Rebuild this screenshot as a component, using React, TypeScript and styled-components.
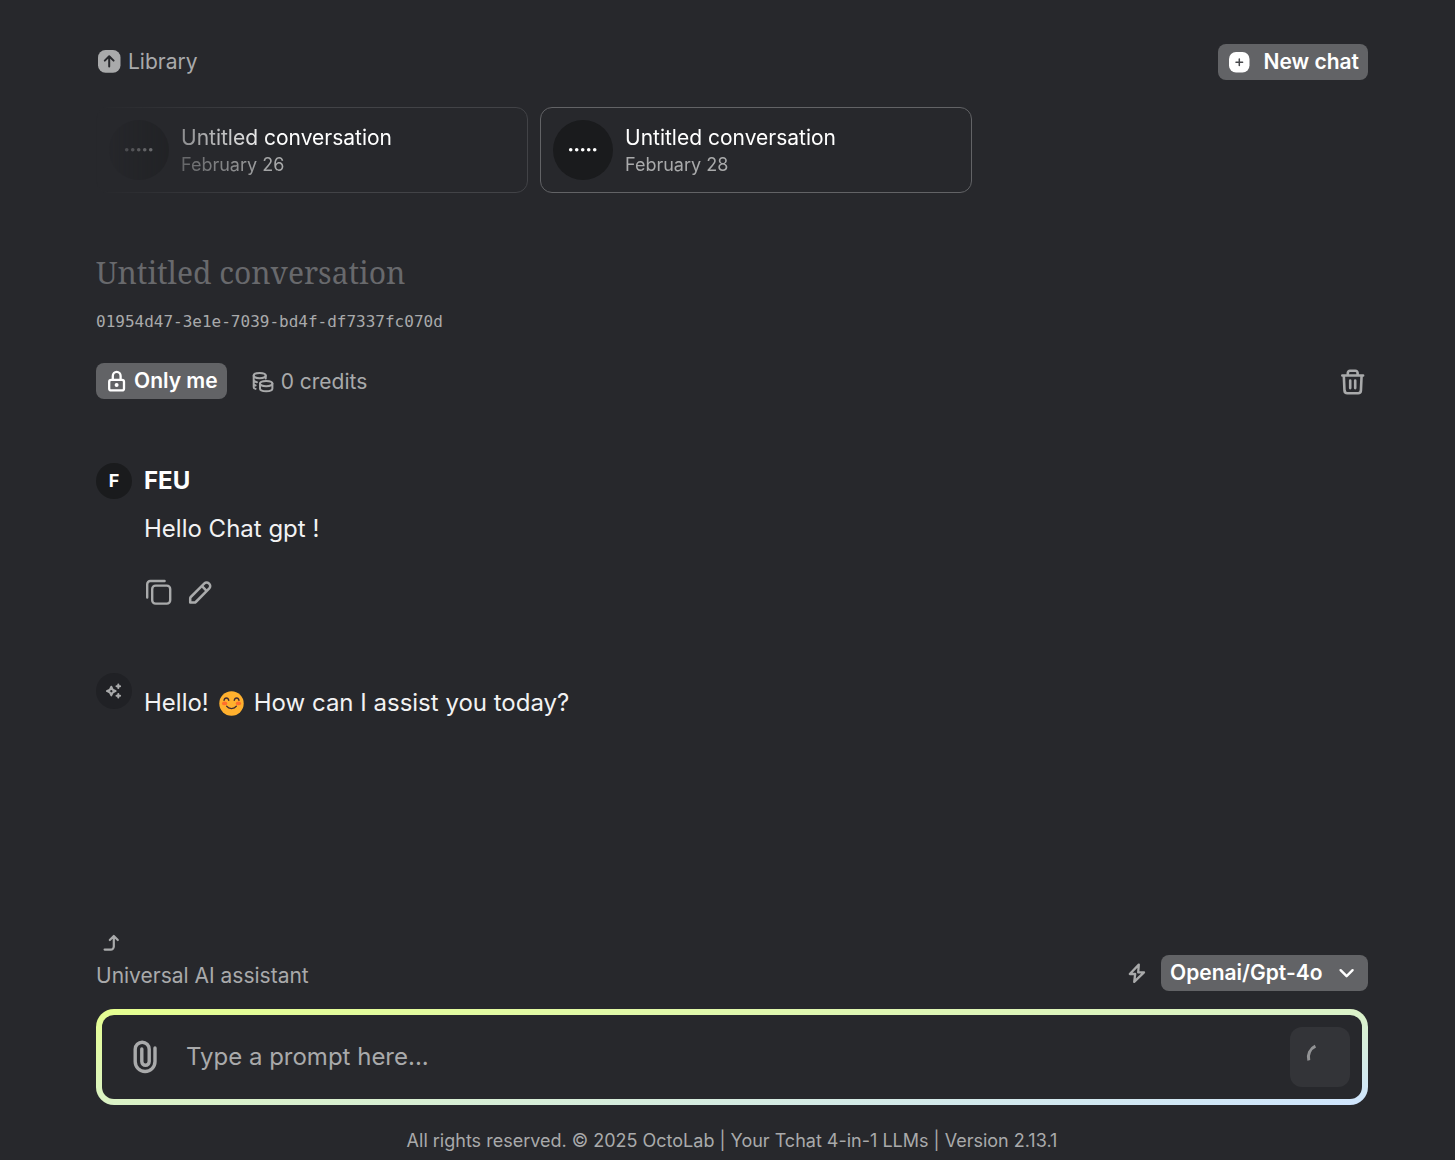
import React from "react";
import styled, { createGlobalStyle } from "styled-components";

const color = {
  bg: "#27282c",
  text: "#f2f2f3",
  muted: "#a9aaab",
  faint: "#68696c",
  pill: "#626366",
  disc: "#1a1b1d",
};

const GlobalStyle = createGlobalStyle`
  *, *::before, *::after { box-sizing: border-box; }
  body {
    margin: 0;
    background: ${color.bg};
    color: ${color.text};
    font-family: Inter, "Liberation Sans", sans-serif;
    font-size: 24px;
    line-height: 36px;
  }
  button, input, select { font: inherit; color: inherit; }
  h1, h2, p { margin: 0; }
  svg { display: block; flex: none; }
`;

const Page = styled.div`
  min-height: 100vh;
  display: flex;
  flex-direction: column;
  padding: 44px 87px 0 96px;
`;

const Bar = styled.div`
  display: flex;
  align-items: center;
  justify-content: space-between;
  gap: 12px;
`;

const Group = styled.div<{ $gap: number }>`
  display: flex;
  align-items: center;
  gap: ${(p) => p.$gap}px;
`;

const LibraryLink = styled.a`
  display: flex;
  align-items: center;
  gap: 6px;
  font-size: 21px;
  color: ${color.muted};
  text-decoration: none;
`;

const Pill = styled.button<{ $gap: number }>`
  display: flex;
  align-items: center;
  gap: ${(p) => p.$gap}px;
  height: 36px;
  padding: 0 9px;
  border: 0;
  border-radius: 8px;
  background: ${color.pill};
  color: #fff;
  font-size: 21px;
  font-weight: 600;
  cursor: pointer;
`;

const IconButton = styled.button`
  display: flex;
  padding: 0;
  border: 0;
  background: none;
  color: ${color.muted};
  cursor: pointer;
`;

const CardList = styled.nav`
  display: flex;
  gap: 12px;
  margin-top: 27px;
  overflow: hidden;
  mask-image: linear-gradient(to right, transparent, #000 180px);
`;

const Card = styled.a<{ $active?: boolean }>`
  flex: 0 1 432px;
  display: flex;
  align-items: center;
  gap: 12px;
  padding: 12px;
  border: 1px solid ${(p) => (p.$active ? color.pill : "#424347")};
  border-radius: 12px;
  color: #fff;
  text-decoration: none;
`;

const Disc = styled.span<{ $size: number; $dim?: boolean }>`
  flex: none;
  display: flex;
  align-items: center;
  justify-content: center;
  width: ${(p) => p.$size}px;
  height: ${(p) => p.$size}px;
  border-radius: 50%;
  background: ${(p) => (p.$dim ? "#202125" : color.disc)};
  color: ${(p) => (p.$dim ? color.muted : "#fff")};
  font-size: 18px;
  font-weight: 700;
`;

const CardText = styled.span`
  display: flex;
  flex-direction: column;
  padding-top: 2px;
  font-size: 21px;
  line-height: 28px;
`;

const CardDate = styled.span`
  font-size: 18px;
  line-height: 26px;
  color: ${color.muted};
`;

const Title = styled.h1`
  margin-top: 59px;
  font-family: "Noto Serif", "DejaVu Serif", serif;
  font-size: 30px;
  font-weight: 400;
  line-height: 42px;
  color: ${color.faint};
`;

const ChatId = styled.p`
  margin: 16px 0 29px;
  font-family: "DejaVu Sans Mono", monospace;
  font-size: 16px;
  line-height: 24px;
  color: ${color.muted};
`;

const Credits = styled.span`
  display: flex;
  align-items: center;
  gap: 6px;
  padding-top: 2px;
  font-size: 21px;
  line-height: 34px;
  color: ${color.muted};
`;

const DeleteButton = styled(IconButton)`
  padding-top: 2px;
`;

const Message = styled.article<{ $top: number }>`
  display: flex;
  align-items: flex-start;
  gap: 12px;
  margin-top: ${(p) => p.$top}px;
`;

const MessageBody = styled.div<{ $top?: number }>`
  padding-top: ${(p) => p.$top ?? 0}px;
  min-width: 0;
`;

const Author = styled.h2`
  font-size: 24px;
  font-weight: 700;
  line-height: 36px;
  color: #fff;
`;

const Text = styled.p<{ $top?: number }>`
  display: flex;
  flex-wrap: wrap;
  align-items: center;
  column-gap: 10px;
  margin-top: ${(p) => p.$top ?? 0}px;
`;

const Actions = styled.div`
  display: flex;
  gap: 12px;
  margin-top: 30px;
`;

const Composer = styled.form`
  margin-top: auto;
  padding-top: 48px;
`;

const Assistant = styled.div`
  display: flex;
  flex-direction: column;
  gap: 4px;
  font-size: 21px;
  line-height: 30px;
  color: ${color.muted};
`;

const ModelBar = styled(Bar)`
  align-items: flex-end;
  color: ${color.muted};
`;

const SelectWrap = styled.span`
  display: grid;
  align-items: center;
  color: #fff;
  > * { grid-area: 1 / 1; }
  > svg { justify-self: end; margin-right: 12px; pointer-events: none; }
`;

const ModelSelect = styled.select`
  appearance: none;
  height: 36px;
  padding: 0 45px 0 9px;
  border: 0;
  border-radius: 8px;
  background: ${color.pill};
  color: #fff;
  font-size: 21px;
  font-weight: 600;
  line-height: 36px;
`;

const PromptBox = styled.div`
  display: flex;
  align-items: center;
  gap: 24px;
  margin-top: 18px;
  padding: 12px 12px 12px 27px;
  border: 6px solid transparent;
  border-radius: 18px;
  background:
    linear-gradient(${color.bg}, ${color.bg}) padding-box,
    linear-gradient(to bottom right, #e6ff8f, #cfe5ff) border-box;
`;

const PromptInput = styled.input`
  flex: 1;
  min-width: 0;
  padding: 0;
  border: 0;
  outline: 0;
  background: none;
  &::placeholder { color: ${color.muted}; opacity: 1; }
`;

const SendButton = styled.button`
  display: flex;
  align-items: center;
  justify-content: center;
  width: 60px;
  height: 60px;
  padding: 0;
  border: 0;
  border-radius: 12px;
  background: #333438;
  color: #929395;
`;

const Footer = styled.footer`
  padding: 21px 0 5px;
  font-size: 18px;
  line-height: 29px;
  text-align: center;
  color: ${color.muted};
`;

type IconProps = { size: number; stroke?: number; children: React.ReactNode };

const Icon = ({ size, stroke = 2, children }: IconProps) => (
  <svg
    width={size}
    height={size}
    viewBox={`0 0 ${size} ${size}`}
    fill="none"
    stroke="currentColor"
    strokeWidth={stroke}
    strokeLinecap="round"
    strokeLinejoin="round"
    aria-hidden="true"
  >
    {children}
  </svg>
);

const LibraryIcon = () => (
  <Icon size={26}>
    <rect x="2" y="1" width="22.5" height="22.8" rx="7.5" fill="currentColor" stroke="none" />
    <path d="M13.2 17.6V7.8M8.8 11.6l4.4-4.4 4.4 4.4" stroke={color.bg} />
  </Icon>
);

const PlusIcon = () => (
  <Icon size={24} stroke={1.5}>
    <rect x="2" y="2" width="20.5" height="20.5" rx="7" fill="currentColor" stroke="none" />
    <path d="M12.3 9v6.6M9 12.3h6.6" stroke="#47484b" />
  </Icon>
);

const DotsIcon = () => (
  <Icon size={30}>
    {[3, 9, 15, 21, 27].map((x) => (
      <circle key={x} cx={x - 0.3} cy="14.7" r="1.8" fill="currentColor" stroke="none" />
    ))}
  </Icon>
);

const LockIcon = () => (
  <Icon size={24} stroke={2.3}>
    <rect x="4.2" y="10.8" width="14.8" height="10.6" rx="2" />
    <path d="M7.8 10.5V7a3.9 4.2 0 0 1 7.8 0v3.5" />
    <circle cx="11.6" cy="16" r="2" fill="currentColor" stroke="none" />
  </Icon>
);

const CoinsIcon = () => (
  <Icon size={24}>
    <ellipse cx="8.7" cy="5.6" rx="6" ry="2.7" />
    <path d="M2.7 5.6v11.6c0 .8.6 1.4 1.9 1.7M2.7 9.8c0 1.2 1.2 2 3.2 2.4M2.7 13.6c0 .9.7 1.5 1.9 1.9M14.7 5.6v2.8" />
    <ellipse cx="15.2" cy="13.6" rx="6.2" ry="2.7" />
    <path d="M9 13.6v4.8c0 1.6 2.8 2.8 6.2 2.8s6.2-1.2 6.2-2.8v-4.8" />
  </Icon>
);

const TrashIcon = () => (
  <Icon size={30} stroke={2.6}>
    <path d="M4.3 8.5h20.8M9.8 8.5V6a2.2 2.2 0 0 1 2.2-2.2h5.4A2.2 2.2 0 0 1 19.6 6v2.5M5.8 8.5l.7 15.2a2.8 2.8 0 0 0 2.8 2.6h10.8a2.8 2.8 0 0 0 2.8-2.6l.7-15.2M12.2 13.5v7.6M17.2 13.5v7.6" />
  </Icon>
);

const CopyIcon = () => (
  <Icon size={30} stroke={2.4}>
    <rect x="8.2" y="8.6" width="18" height="18" rx="3.4" />
    <path d="M20.6 4H6.4A3.2 3.2 0 0 0 3.2 7.2v13.4" />
  </Icon>
);

const PencilIcon = () => (
  <Icon size={30} stroke={2.5}>
    <path d="M4.2 25.6v-4.2a2 2 0 0 1 .6-1.4L18.4 6.4a3.1 3.1 0 0 1 4.4 0l.5.5a3.1 3.1 0 0 1 0 4.4L9.8 25a2 2 0 0 1-1.4.6zM16 9.2l4.6 4.6" />
  </Icon>
);

const SparkleIcon = () => (
  <Icon size={18}>
    <path d="M6.3 4.8c.5 2.7 1.6 3.8 4.3 4.3-2.7.5-3.8 1.6-4.3 4.3-.5-2.7-1.6-3.8-4.3-4.3 2.7-.5 3.8-1.6 4.3-4.3z" />
    <path d="M13.3 2.4v3.6M11.5 4.2h3.6M13.3 12v3.6M11.5 13.8h3.6" />
  </Icon>
);

const TurnUpIcon = () => (
  <Icon size={30} stroke={2.2}>
    <path d="M8.6 22.6h6.2a3 3 0 0 0 3-3V9.5M13.8 13l4-4 4 4" />
  </Icon>
);

const BoltIcon = () => (
  <Icon size={24} stroke={2.3}>
    <path d="M13.8 3.6L4.8 13h5.4l-1 7.8L19 11.4h-5.8z" />
  </Icon>
);

const ChevronIcon = () => (
  <Icon size={18} stroke={2.4}>
    <path d="M2.6 6.2l6 6 6-6" />
  </Icon>
);

const ClipIcon = () => (
  <svg width="33" height="42" viewBox="0 0 33 42" fill="none" stroke="currentColor" strokeWidth="3.4" strokeLinecap="round" aria-hidden="true">
    <path d="M26 12v13.6a9.9 9.9 0 0 1-19.8 0V13.2a7 7 0 0 1 14 0v12.4a3.7 3.7 0 0 1-7.4 0V13" />
  </svg>
);

const SpinnerIcon = () => (
  <Icon size={30} stroke={3}>
    <path d="M10.4 4.2A12 12 0 0 0 3.8 18.4" strokeLinecap="butt" />
  </Icon>
);

const SmileIcon = () => (
  <svg width="25" height="25" viewBox="0 0 25 25" fill="none" role="img" aria-label="smiling face">
    <circle cx="12.5" cy="12.5" r="12.2" fill="#ffb02e" />
    <ellipse cx="5.6" cy="12.4" rx="2.7" ry="1.9" fill="#ff6f2c" />
    <ellipse cx="19.4" cy="12.4" rx="2.7" ry="1.9" fill="#ff6f2c" />
    <path d="M5 9.4c.5-3.2 4.2-3.2 4.8 0M15.2 9.4c.6-3.2 4.3-3.2 4.8 0M7.6 15.2c2.2 3.1 7.6 3.1 9.8 0" stroke="#402a32" strokeWidth="1.3" strokeLinecap="round" />
  </svg>
);

const conversations = [
  { id: 1, name: "Untitled conversation", date: "February 26", active: false },
  { id: 2, name: "Untitled conversation", date: "February 28", active: true },
];

export default function App() {
  return (
    <>
      <GlobalStyle />
      <Page>
        <Bar as="header">
          <LibraryLink href="#library">
            <LibraryIcon />
            Library
          </LibraryLink>
          <Pill type="button" $gap={12}>
            <PlusIcon />
            New chat
          </Pill>
        </Bar>

        <CardList aria-label="Conversations">
          {conversations.map((c) => (
            <Card key={c.id} href={`#conversation-${c.id}`} $active={c.active}>
              <Disc $size={60}>
                <DotsIcon />
              </Disc>
              <CardText>
                {c.name}
                <CardDate>{c.date}</CardDate>
              </CardText>
            </Card>
          ))}
        </CardList>

        <main>
          <Title>Untitled conversation</Title>
          <ChatId>01954d47-3e1e-7039-bd4f-df7337fc070d</ChatId>
          <Bar>
            <Group $gap={24}>
              <Pill type="button" $gap={5}>
                <LockIcon />
                Only me
              </Pill>
              <Credits>
                <CoinsIcon />0 credits
              </Credits>
            </Group>
            <DeleteButton type="button" aria-label="Delete conversation">
              <TrashIcon />
            </DeleteButton>
          </Bar>

          <Message $top={64}>
            <Disc $size={36}>F</Disc>
            <MessageBody>
              <Author>FEU</Author>
              <Text $top={12}>Hello Chat gpt !</Text>
              <Actions>
                <IconButton type="button" aria-label="Copy message">
                  <CopyIcon />
                </IconButton>
                <IconButton type="button" aria-label="Edit message">
                  <PencilIcon />
                </IconButton>
              </Actions>
            </MessageBody>
          </Message>

          <Message $top={66}>
            <Disc $size={36} $dim>
              <SparkleIcon />
            </Disc>
            <MessageBody $top={12}>
              <Text>
                <span>Hello!</span>
                <SmileIcon />
                <span>How can I assist you today?</span>
              </Text>
            </MessageBody>
          </Message>
        </main>

        <Composer>
          <ModelBar>
            <Assistant>
              <TurnUpIcon />
              Universal AI assistant
            </Assistant>
            <Group $gap={12}>
              <BoltIcon />
              <SelectWrap>
                <ModelSelect aria-label="Model" defaultValue="gpt-4o">
                  <option value="gpt-4o">Openai/Gpt-4o</option>
                </ModelSelect>
                <ChevronIcon />
              </SelectWrap>
            </Group>
          </ModelBar>
          <PromptBox>
            <IconButton type="button" aria-label="Attach a file">
              <ClipIcon />
            </IconButton>
            <PromptInput type="text" aria-label="Prompt" placeholder="Type a prompt here..." />
            <SendButton type="submit" aria-label="Send" disabled>
              <SpinnerIcon />
            </SendButton>
          </PromptBox>
        </Composer>

        <Footer>All rights reserved. © 2025 OctoLab | Your Tchat 4-in-1 LLMs | Version 2.13.1</Footer>
      </Page>
    </>
  );
}
